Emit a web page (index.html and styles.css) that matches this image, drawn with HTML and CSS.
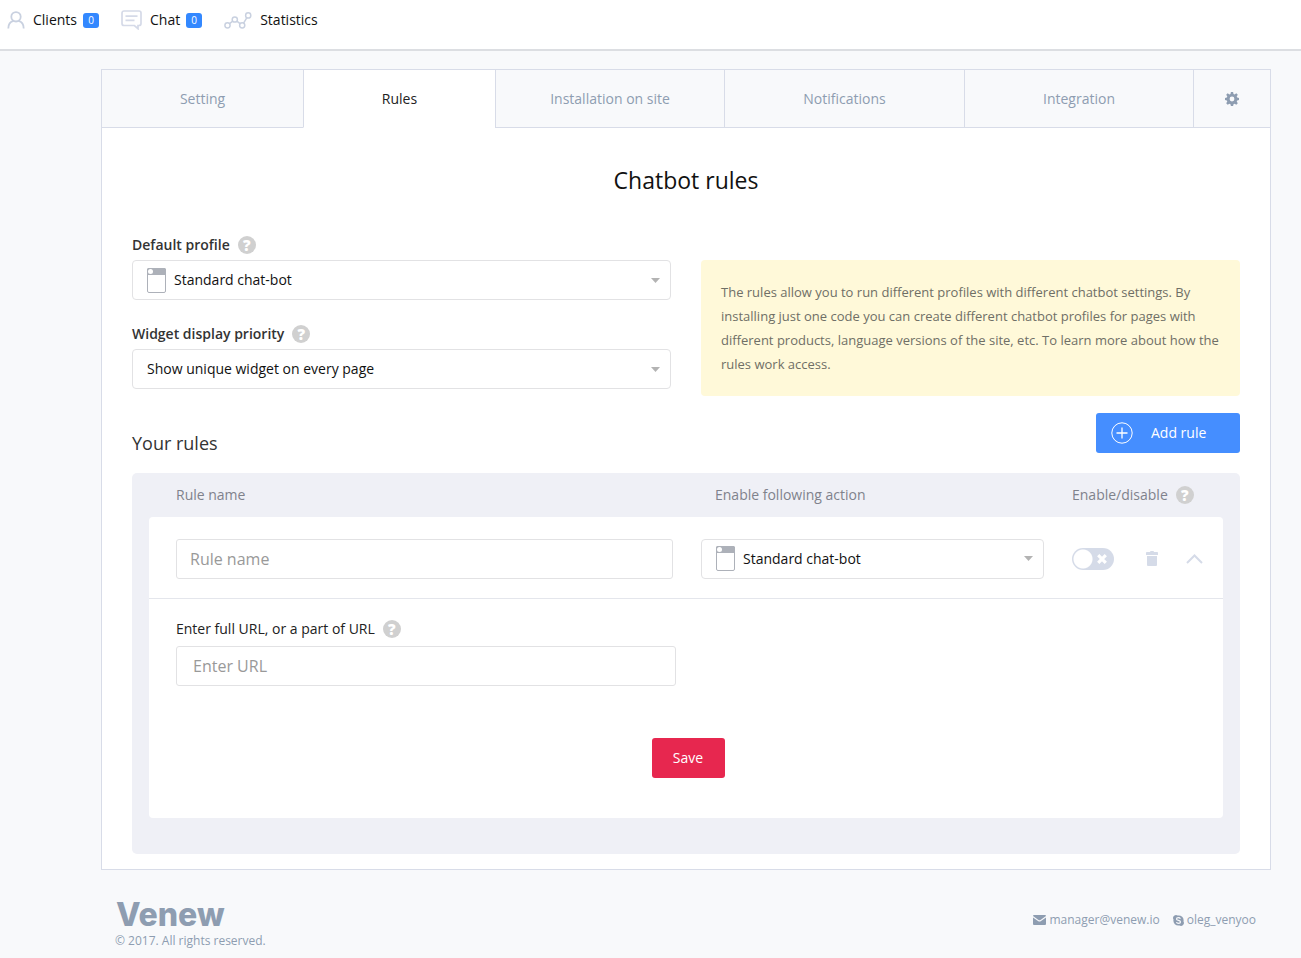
FILE: index.html
```html
<!DOCTYPE html>
<html lang="en">
<head>
<meta charset="utf-8">
<title>Chatbot rules</title>
<meta name="viewport" content="width=device-width, initial-scale=1">
<link rel="stylesheet" href="styles.css">
</head>
<body>
<header class="topbar">
  <nav class="topnav">
    <a class="topnav-link" href="#clients">
      <svg width="18" height="18" viewBox="0 0 18 18" fill="none" stroke="#c9d1e0" stroke-width="1.8"><circle cx="9" cy="5.8" r="4.7"/><path d="M1.300 17.500c0-4.500 2.400-7 5.400-7.600M16.700 17.500c0-4.500-2.400-7-5.400-7.600"/></svg>
      <span>Clients</span><span class="badge">0</span>
    </a>
    <a class="topnav-link" href="#chat">
      <svg width="21" height="20" viewBox="0 0 21 20" fill="none" stroke="#d5dae8" stroke-width="1.700"><path d="M3 1h15a2 2 0 0 1 2 2v10.500a2 2 0 0 1-2 2H17v3.200l-3.600-3.200H3a2 2 0 0 1-2-2V3a2 2 0 0 1 2-2z"/><path d="M4.500 6.200h12M4.500 10.400h9"/></svg>
      <span>Chat</span><span class="badge">0</span>
    </a>
    <a class="topnav-link" href="#statistics">
      <svg width="28" height="17" viewBox="0 0 28 17" fill="none" stroke="#c9d1e0" stroke-width="1.500"><circle cx="3.500" cy="13.300" r="2.600"/><circle cx="10.800" cy="7.500" r="2.600"/><circle cx="18.200" cy="13.300" r="2.600"/><circle cx="24.200" cy="3.400" r="2.600"/><path d="M5.600 11.700l3.100-2.500M12.800 9.100l3.300 2.600M19.600 11.100l3.300-5.400"/></svg>
      <span>Statistics</span>
    </a>
  </nav>
</header>

<main class="page">
  <nav class="tabs">
    <a class="tab" href="#setting">Setting</a>
    <a class="tab tab-active" href="#rules">Rules</a>
    <a class="tab" href="#installation">Installation on site</a>
    <a class="tab" href="#notifications">Notifications</a>
    <a class="tab" href="#integration">Integration</a>
    <a class="tab" href="#options" aria-label="Options">
      <svg width="14" height="14" viewBox="0 0 14 14" fill="#8e9db1"><path fill-rule="evenodd" d="M5.900 0h2.200l.4 1.900 1.100.5 1.700-1.100 1.500 1.500-1.100 1.700.5 1.100 1.800.3v2.200l-1.800.4-.5 1.100 1.100 1.600-1.500 1.600-1.700-1.100-1.100.5L8.100 14H5.900l-.4-1.800-1.100-.5-1.700 1.100-1.500-1.600 1.100-1.600-.5-1.100L0 8.100V5.900l1.800-.3.5-1.100-1.100-1.700 1.500-1.500 1.700 1.100 1.100-.5zM7 4.600a2.400 2.400 0 1 0 0 4.800 2.400 2.400 0 0 0 0-4.800z"/></svg>
    </a>
  </nav>

  <section class="panel">
    <h1 class="title">Chatbot rules</h1>

    <div class="intro">
      <div class="fields">
        <div class="field">
          <div class="field-head">
            <label class="field-label" for="profile">Default profile</label>
            <button class="help" type="button" aria-label="Help">?</button>
          </div>
          <div class="select-box">
            <svg width="19" height="25" viewBox="0 0 19 25"><rect x=".5" y=".5" width="18" height="24" rx="1.500" fill="#fff" stroke="#adb1b9"/><path d="M0 7V1.500A1.500 1.500 0 0 1 1.500 0h16A1.500 1.500 0 0 1 19 1.500V7z" fill="#adb1b9"/><circle cx="3.500" cy="3.500" r="2.500" fill="#fff"/></svg>
            <select class="select" id="profile"><option>Standard chat-bot</option></select>
            <svg width="9" height="5" viewBox="0 0 9 5"><path d="M0 0h9L4.500 5z" fill="#b3b3b3"/></svg>
          </div>
        </div>
        <div class="field">
          <div class="field-head">
            <label class="field-label" for="priority">Widget display priority</label>
            <button class="help" type="button" aria-label="Help">?</button>
          </div>
          <div class="select-box">
            <select class="select" id="priority"><option>Show unique widget on every page</option></select>
            <svg width="9" height="5" viewBox="0 0 9 5"><path d="M0 0h9L4.500 5z" fill="#b3b3b3"/></svg>
          </div>
        </div>
      </div>
      <p class="info">The rules allow you to run different profiles with different chatbot settings. By installing just one code you can create different chatbot profiles for pages with different products, language versions of the site, etc. To learn more about how the rules work access.</p>
    </div>

    <div class="rules-head">
      <h2 class="subtitle">Your rules</h2>
      <button class="add-button" type="button">
        <svg width="22" height="22" viewBox="0 0 22 22" fill="none" stroke="#fff"><circle cx="11" cy="11" r="10.200"/><path d="M11 5.500v11M5.500 11h11" stroke-width="1.300"/></svg>
        <span>Add rule</span>
      </button>
    </div>

    <div class="rules">
      <div class="rule-grid rule-columns">
        <span>Rule name</span>
        <span class="column-action">Enable following action</span>
        <span class="column-toggle">Enable/disable <button class="help" type="button" aria-label="Help">?</button></span>
      </div>
      <form class="card">
        <div class="rule-grid rule-row">
          <input class="input" type="text" placeholder="Rule name" aria-label="Rule name">
          <div class="select-box">
            <svg width="19" height="25" viewBox="0 0 19 25"><rect x=".5" y=".5" width="18" height="24" rx="1.500" fill="#fff" stroke="#adb1b9"/><path d="M0 7V1.500A1.500 1.500 0 0 1 1.500 0h16A1.500 1.500 0 0 1 19 1.500V7z" fill="#adb1b9"/><circle cx="3.500" cy="3.500" r="2.500" fill="#fff"/></svg>
            <select class="select" aria-label="Enable following action"><option>Standard chat-bot</option></select>
            <svg width="9" height="5" viewBox="0 0 9 5"><path d="M0 0h9L4.500 5z" fill="#b3b3b3"/></svg>
          </div>
          <div class="actions">
            <label class="toggle">
              <input class="toggle-input" type="checkbox" aria-label="Enable/disable">
              <svg class="toggle-cross" width="10" height="10" viewBox="0 0 10 10" stroke="#fff" stroke-width="3.200"><path d="M1.200 1.200l7.600 7.600M8.800 1.200L1.200 8.800"/></svg>
            </label>
            <button type="button" aria-label="Delete rule">
              <svg width="12" height="15" viewBox="0 0 12 15" fill="#d5dbe8"><path d="M.8 1H4L4.500 0h3L8 1h3.200a.8.8 0 0 1 .8.800V4H0V1.800A.8.800 0 0 1 .8 1zM1 5h10v9a1 1 0 0 1-1 1H2a1 1 0 0 1-1-1z"/></svg>
            </button>
            <button type="button" aria-label="Collapse rule">
              <svg width="17" height="10" viewBox="0 0 17 10" fill="none" stroke="#d5dbe8" stroke-width="2"><path d="M1 9l7.500-7.500L16 9"/></svg>
            </button>
          </div>
        </div>
        <div class="rule-body">
          <div class="field-head">
            <label for="url">Enter full URL, or a part of URL</label>
            <button class="help" type="button" aria-label="Help">?</button>
          </div>
          <input class="input input-url" id="url" type="text" placeholder="Enter URL">
          <button class="save-button" type="submit">Save</button>
        </div>
      </form>
    </div>
  </section>

  <footer class="footer">
    <div>
      <div class="logo">Venew</div>
      <div>© 2017. All rights reserved.</div>
    </div>
    <div class="contacts">
      <a class="contact" href="mailto:manager@venew.io">
        <svg width="13" height="10" viewBox="0 0 13 10" fill="#8e9db1"><path d="M1 0h11a1 1 0 0 1 1 1L7.500 5a1.700 1.700 0 0 1-2 0L0 1a1 1 0 0 1 1-1zM0 2.400l5 3.500a2.700 2.700 0 0 0 3 0l5-3.500V9a1 1 0 0 1-1 1H1a1 1 0 0 1-1-1z"/></svg>
        <span>manager@venew.io</span>
      </a>
      <a class="contact" href="#skype">
        <svg width="11" height="11" viewBox="0 0 11 11"><path d="M3 0a3 3 0 0 1 1.600.5A5 5 0 0 1 10.500 6.400 3 3 0 0 1 6.400 10.500 5 5 0 0 1 .5 4.600 3 3 0 0 1 3 0z" fill="#8e9db1"/><path d="M7.400 3.700C7 2.900 6.300 2.700 5.400 2.700c-1 0-1.900.5-1.900 1.300 0 2 4 .8 4 2.900 0 .9-.9 1.400-2 1.400-1 0-1.800-.4-2.100-1.200" fill="none" stroke="#f8f9fb" stroke-width="1.200"/></svg>
        <span>oleg_venyoo</span>
      </a>
    </div>
  </footer>
</main>
</body>
</html>
```
FILE: styles.css
```css
* {
  box-sizing: border-box;
}

body {
  margin: 0;
  background: #f8f9fb;
  color: #222;
  font: 14px/20px "Open Sans", "Noto Sans", sans-serif;
}

a {
  color: inherit;
  text-decoration: none;
}

button,
input,
select {
  margin: 0;
  font: inherit;
  color: inherit;
}

button {
  padding: 0;
  border: 0;
  background: none;
  cursor: pointer;
}

svg {
  display: block;
  flex: none;
}

.topbar {
  height: 51px;
  padding: 10px 7px;
  border-bottom: 2px solid #dcdee2;
  background: #fff;
  color: #111;
}

.topnav,
.topnav-link {
  display: flex;
  align-items: center;
}

.topnav {
  gap: 22px;
}

.topnav-link {
  gap: 8px;
}

.badge {
  min-width: 16px;
  margin-left: -2px;
  padding: 0 4px;
  border-radius: 3px;
  background: #3388ff;
  color: #fff;
  font-size: 10px;
  line-height: 15px;
  text-align: center;
}

.page {
  margin: 18px 30px 0 101px;
}

.tabs {
  display: grid;
  grid-template-columns: 202fr 192fr 229fr 240fr 229fr 77fr;
  border: solid #d8dce8;
  border-width: 1px 1px 0 0;
}

.tab {
  display: flex;
  align-items: center;
  justify-content: center;
  height: 58px;
  border: solid #d8dce8;
  border-width: 0 0 1px 1px;
  color: #8e9db1;
}

.tab-active {
  border-bottom-color: #fff;
  background: #fff;
  color: #222;
}

.panel {
  padding: 35px 30px 15px;
  border: 1px solid #d8dce8;
  border-top: 0;
  background: #fff;
}

.title {
  margin: 0 0 47px;
  color: #111;
  font-size: 23px;
  font-weight: 400;
  line-height: 34px;
  text-align: center;
}

.intro {
  display: grid;
  grid-template-columns: 1fr 1fr;
  gap: 30px;
}

.fields {
  display: grid;
  gap: 24px;
  align-content: start;
  margin-top: -9px;
}

.field-head {
  display: flex;
  align-items: center;
  gap: 8px;
  height: 20px;
  margin-bottom: 5px;
}

.field-label {
  color: #333;
  font-weight: 600;
}

.help {
  width: 18px;
  height: 18px;
  border-radius: 50%;
  background: #d0d0d0;
  color: #fff;
  font-size: 15px;
  font-weight: 800;
  line-height: 18px;
  text-align: center;
}

.select-box {
  display: flex;
  align-items: center;
  gap: 8px;
  height: 40px;
  padding: 0 10px 0 14px;
  border: 1px solid #e2e2e4;
  border-radius: 4px;
  background: #fff;
}

.select {
  flex: 1;
  min-width: 0;
  height: 38px;
  padding: 0;
  border: 0;
  outline: 0;
  background: none;
  color: #111;
  appearance: none;
}

.info {
  margin: 16px 0 0;
  padding: 20px;
  border-radius: 4px;
  background: #fff9d9;
  color: #6f6f66;
  font-size: 13px;
  line-height: 24px;
}

.rules-head {
  display: flex;
  align-items: center;
  justify-content: space-between;
  margin: 17px 0 20px;
}

.subtitle {
  margin: 0;
  padding-top: 20px;
  color: #333;
  font-size: 18px;
  font-weight: 400;
  line-height: 20px;
}

.add-button {
  display: flex;
  align-items: center;
  gap: 18px;
  width: 144px;
  height: 40px;
  padding: 0 15px;
  border-radius: 3px;
  background: #458eff;
  color: #fff;
}

.rules {
  padding: 0 17px 36px;
  border-radius: 5px;
  background: #eff0f6;
}

.rule-grid {
  display: grid;
  grid-template-columns: 497fr 343fr 131px;
  gap: 28px;
  align-items: center;
  padding: 0 20px 0 27px;
}

.rule-columns {
  height: 44px;
  color: #7f828c;
}

.column-action {
  padding-left: 14px;
}

.column-toggle {
  display: flex;
  align-items: center;
  gap: 8px;
}

.card {
  border-radius: 4px;
  background: #fff;
}

.rule-row {
  height: 82px;
  padding-top: 2px;
  border-bottom: 1px solid #e4e6ec;
}

.input {
  width: 100%;
  height: 40px;
  padding: 0 13px;
  border: 1px solid #e2e2e4;
  border-radius: 3px;
  outline: 0;
  background: #fff;
  font-size: 16px;
}

.input::placeholder {
  color: #999;
  opacity: 1;
}

.input-url {
  max-width: 500px;
  padding: 0 16px;
}

.actions {
  display: grid;
  grid-template-columns: 1fr 12px 17px;
  gap: 28px;
  align-items: center;
}

.toggle {
  position: relative;
  display: block;
  width: 42px;
  height: 22px;
}

.toggle-input {
  display: block;
  width: 42px;
  height: 22px;
  border-radius: 11px;
  background: radial-gradient(circle at 11px 11px, #fff 9px, #d5dbe8 10px);
  appearance: none;
}

.toggle-cross {
  position: absolute;
  top: 6px;
  right: 7px;
}

.rule-body {
  padding: 20px 23px 40px 27px;
}

.rule-body .field-head {
  margin-bottom: 7px;
}

.save-button {
  display: block;
  width: 73px;
  height: 40px;
  margin: 52px auto 0;
  border-radius: 3px;
  background: #e7274f;
  color: #fff;
}

.footer {
  display: flex;
  justify-content: space-between;
  padding: 25px 15px 8px 14px;
  color: #8e9db1;
  font-size: 12px;
}

.logo {
  height: 36px;
  padding-left: 1px;
  font-family: Inter, "Open Sans", sans-serif;
  font-size: 32px;
  font-weight: 800;
  line-height: 40px;
}

.contacts {
  display: flex;
  gap: 13px;
  padding-top: 15px;
}

.contact {
  display: flex;
  align-items: center;
  gap: 3px;
  height: 20px;
}
```
